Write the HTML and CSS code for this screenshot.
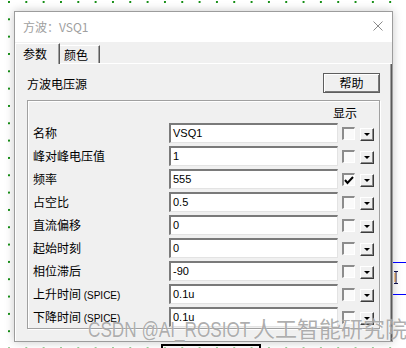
FILE: index.html
```html
<!DOCTYPE html>
<html lang="zh">
  <head>
    <title>方波：VSQ1</title>
    <meta charset="utf-8" />
    <link rel="stylesheet" href="styles.css">
  </head>
  <body>
    <div class="window">
      <div class="titlebar">
        <span class="title">方波：VSQ1</span>
        <svg class="close" width="10" height="10" viewBox="0 0 10 10">
          <path d="M0.5 0.5 L9.5 9.5 M9.5 0.5 L0.5 9.5" stroke="#8a8a8a" stroke-width="1" fill="none" />
        </svg>
      </div>

      <div class="tabs">
        <div class="tab active">参数</div>
        <div class="tab">颜色</div>
      </div>

      <div class="panel">
        <div class="head">
          <span>方波电压源</span>
          <button class="help">帮助</button>
        </div>

        <div class="group">
          <div class="show">显示</div>
          <div class="rows">
            <div class="row">
              <span class="label">名称</span>
              <span class="field">VSQ1</span>
              <span class="check"></span>
              <span class="drop"></span>
            </div>
            <div class="row">
              <span class="label">峰对峰电压值</span>
              <span class="field">1</span>
              <span class="check"></span>
              <span class="drop"></span>
            </div>
            <div class="row">
              <span class="label">频率</span>
              <span class="field">555</span>
              <span class="check">
                <svg width="10" height="9" viewBox="0 0 10 9">
                  <path d="M1 4 L3.5 7 L9 1" stroke="#000" stroke-width="2" fill="none" />
                </svg>
              </span>
              <span class="drop"></span>
            </div>
            <div class="row">
              <span class="label">占空比</span>
              <span class="field">0.5</span>
              <span class="check"></span>
              <span class="drop"></span>
            </div>
            <div class="row">
              <span class="label">直流偏移</span>
              <span class="field">0</span>
              <span class="check"></span>
              <span class="drop"></span>
            </div>
            <div class="row">
              <span class="label">起始时刻</span>
              <span class="field">0</span>
              <span class="check"></span>
              <span class="drop"></span>
            </div>
            <div class="row">
              <span class="label">相位滞后</span>
              <span class="field">-90</span>
              <span class="check"></span>
              <span class="drop"></span>
            </div>
            <div class="row">
              <span class="label">上升时间 <small>(SPICE)</small></span>
              <span class="field">0.1u</span>
              <span class="check"></span>
              <span class="drop"></span>
            </div>
            <div class="row">
              <span class="label">下降时间 <small>(SPICE)</small></span>
              <span class="field">0.1u</span>
              <span class="check"></span>
              <span class="drop"></span>
            </div>
          </div>
        </div>
      </div>
    </div>

    <!-- bits of the schematic behind the dialog -->
    <div class="wire top"></div>
    <div class="wire bottom"></div>
    <svg class="cursor" width="6" height="13" viewBox="0 0 6 13">
      <path d="M1 0.5 H5 M3 0.5 V12.5 M1 12.5 H5" stroke="#10104a" stroke-width="1" fill="none" />
      <path d="M2 2 V11" stroke="#d88a2a" stroke-width="1" />
    </svg>
    <div class="part"></div>

    <div class="watermark"><span class="latin">CSDN @AI_ROSIOT</span>人工智能研究院</div>
  </body>
</html>
```

FILE: styles.css
```css
body {
  margin: 0;
  padding: 11px 0 0 14px;
  width: 392px;
  height: 337px;
  overflow: hidden;
  position: relative;
  background: #fff radial-gradient(circle at 1px 1px, #0b8a0b 0.7px, transparent 1.1px);
  background-size: 17.33px 17.33px;
  background-position: 8px 1px;
  font-family: "Noto Sans CJK SC", sans-serif;
  font-size: 12px;
  color: #000;
}

.window {
  width: 377px;
  height: 329px;
  border: 1px solid #9c9c9c;
  background: #f0f0f0;
  box-shadow: 0 0 9px rgba(0, 0, 0, 0.22);
  display: flex;
  flex-direction: column;
}

.titlebar {
  height: 30px;
  background: #fff;
  display: flex;
  align-items: center;
  justify-content: space-between;
  padding: 0 9px 0 8px;
  color: #a0a0a0;
  line-height: 1;
}

.close {
  display: block;
  margin-top: -2px;
}

.tabs {
  height: 21px;
  display: flex;
  align-items: flex-end;
  border-bottom: 1px solid #fff;
}

.tab {
  width: 40px;
  height: 18px;
  box-sizing: border-box;
  padding-left: 4px;
  border-top: 1px solid #fff;
  border-right: 1px solid #5a5a5a;
  box-shadow: inset -1px 0 #a0a0a0;
  line-height: 17px;
  font-size: 12px;
}

.tab.active {
  position: relative;
  width: 45px;
  height: 21px;
  margin-bottom: -1px;
  padding-left: 7px;
  border-left: 1px solid #fff;
  background: #f0f0f0;
  line-height: 20px;
}

.panel {
  flex: 1;
  border-left: 1px solid #fff;
  border-right: 1px solid #5a5a5a;
  box-shadow: inset -1px 0 #a0a0a0;
  padding: 9px 11px 0 11px;
}

.head {
  height: 20px;
  display: flex;
  align-items: center;
  justify-content: space-between;
}

.help {
  width: 57px;
  height: 20px;
  padding: 0;
  margin: 0;
  font-family: "Noto Sans CJK SC", sans-serif;
  font-size: 12px;
  line-height: 1;
  background: #f0f0f0;
  border: 1px solid #5e5e5e;
  box-shadow: inset 1px 1px #fff, inset -1px -1px #7a7a7a;
}

.group {
  margin-top: 7px;
  border: 1px solid #a0a0a0;
  box-shadow: inset 1px 1px #fff, 1px 1px #fff;
  padding: 3px 3px 1px 5px;
}

.show {
  height: 17px;
  display: flex;
  align-items: center;
  justify-content: flex-end;
  padding-right: 19px;
  margin-bottom: 2px;
  line-height: 1;
}

.rows {
  display: flex;
  flex-direction: column;
  gap: 3px;
}

.row {
  height: 20px;
  display: flex;
  align-items: flex-start;
}

.label {
  width: 136px;
  height: 20px;
  line-height: 20px;
  white-space: nowrap;
}

.label small {
  font-family: "Liberation Sans", sans-serif;
  font-size: 10px;
}

.field {
  width: 169px;
  height: 20px;
  box-sizing: border-box;
  background: #fff;
  border-style: solid;
  border-width: 2px 1px 1px 2px;
  border-color: #7a7a7a #e3e3e3 #e3e3e3 #7a7a7a;
  padding-left: 2px;
  font-family: "Liberation Sans", sans-serif;
  font-size: 11px;
  line-height: 17px;
}

.check {
  width: 13px;
  height: 13px;
  box-sizing: border-box;
  margin: 4px 0 0 4px;
  background: #fafafa;
  border-style: solid;
  border-width: 2px 1px 1px 2px;
  border-color: #8c8c8c #fff #fff #8c8c8c;
  display: flex;
  align-items: flex-end;
  justify-content: center;
}

.check svg {
  display: block;
}

.drop {
  width: 14px;
  height: 13px;
  box-sizing: border-box;
  margin: 5px 0 0 5px;
  background: #f0f0f0;
  border: 1px solid;
  border-color: #fff #3c3c3c #3c3c3c #fff;
  box-shadow: inset -1px -1px #8a8a8a;
  display: flex;
  align-items: center;
  justify-content: center;
}

.drop::after {
  content: "";
  border-left: 3px solid transparent;
  border-right: 3px solid transparent;
  border-top: 3px solid #000;
  margin-top: -1px;
}

.wire {
  position: absolute;
  left: 393px;
  width: 13px;
  height: 1px;
  background: #0000ff;
}

.wire.top {
  top: 262px;
}

.wire.bottom {
  top: 294px;
}

.cursor {
  position: absolute;
  left: 393px;
  top: 271px;
}

.part {
  position: absolute;
  left: 161px;
  top: 344px;
  width: 96px;
  height: 10px;
  border: 2px solid #000;
  border-bottom: none;
}

.watermark {
  position: absolute;
  left: 88px;
  top: 313px;
  font-size: 22px;
  line-height: 28px;
  white-space: nowrap;
  color: rgba(120, 120, 120, 0.6);
  text-shadow: 0 0 1px rgba(255, 255, 255, 0.9);
}

.latin {
  display: inline-block;
  width: 165px;
  font-family: "Liberation Sans", sans-serif;
  font-size: 22px;
  transform: scaleX(0.78);
  transform-origin: left center;
}
```
